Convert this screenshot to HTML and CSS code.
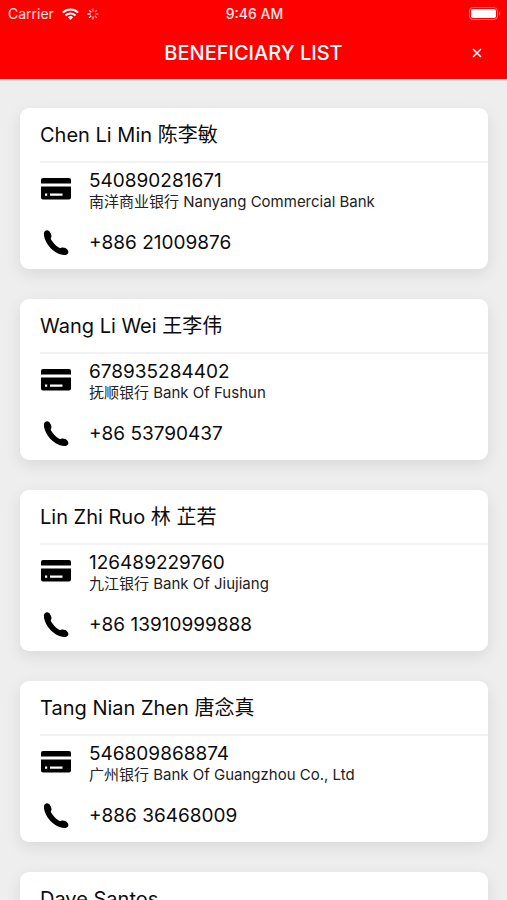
FILE: index.html
```html
<!DOCTYPE html>
<html lang="en">
<head>
<meta charset="utf-8">
<meta name="viewport" content="width=device-width, initial-scale=1">
<title>Beneficiary List</title>
<link rel="stylesheet" href="styles.css">
</head>
<body>
<svg class="sprite" aria-hidden="true">
  <symbol id="card" viewBox="0 0 30 22">
    <path d="M2 0h26a2 2 0 0 1 2 2v3.500H0V2a2 2 0 0 1 2-2z"/>
    <path fill-rule="evenodd" d="M0 8.500h30v11a2 2 0 0 1-2 2H2a2 2 0 0 1-2-2zM4 15.500v2.200h2.200v-2.200zM9 15.500v2.200h12.500v-2.200z"/>
  </symbol>
  <symbol id="phone" viewBox="0 0 26 26">
    <path d="M3.800 5.500C5.200 13 12 20.500 20 22" fill="none" stroke="#000" stroke-width="5.500" stroke-linecap="round"/>
    <ellipse cx="4.700" cy="4.800" rx="3.400" ry="4.600" transform="rotate(-24 4.700 4.800)"/>
    <ellipse cx="20.800" cy="21.200" rx="4.800" ry="3.500" transform="rotate(26 20.800 21.200)"/>
  </symbol>
</svg>
<div class="app">
  <header class="top">
    <div class="status">
      <div class="status-left">
        <span>Carrier</span>
        <svg class="wifi" viewBox="0 0 17 12" aria-hidden="true"><path d="M.8 4.600a11 11 0 0 1 15.400 0M3.500 7.500a7.200 7.200 0 0 1 10 0"/><path class="dot" d="M5.800 9.300a4 4 0 0 1 5.400 0L8.500 12z"/></svg>
        <svg class="spinner" viewBox="0 0 12 12" aria-hidden="true"><path opacity=".5" d="M6 .5v3M9.900 2.100L7.800 4.200M11.500 6h-3"/><path opacity=".7" d="M9.900 9.900L7.800 7.800M6 11.500v-3"/><path opacity=".95" d="M2.100 9.900l2.100-2.100M.5 6h3M2.100 2.100l2.100 2.100"/></svg>
      </div>
      <span class="time">9:46 AM</span>
      <svg class="battery" viewBox="0 0 32 14" aria-hidden="true"><rect class="shell" x=".5" y=".5" width="28" height="12" rx="3.500"/><rect class="charge" x="2" y="2" width="25" height="9" rx="2"/><path class="tip" d="M30 4.500c1.800.6 1.800 3.400 0 4z"/></svg>
    </div>
    <div class="bar">
      <h1>BENEFICIARY LIST</h1>
      <button class="close" type="button" aria-label="Close"><svg viewBox="0 0 10 10" aria-hidden="true"><path d="M1 1l8 8M9 1L1 9"/></svg></button>
    </div>
  </header>
  <main class="list">
    <article class="card">
      <h2>Chen Li Min 陈李敏</h2>
      <div class="row account"><svg class="card-icon" aria-hidden="true"><use href="#card"/></svg><div><p class="number">540890281671</p><p class="bank">南洋商业银行 Nanyang Commercial Bank</p></div></div>
      <div class="row phone"><svg class="phone-icon" aria-hidden="true"><use href="#phone"/></svg><p class="number">+886 21009876</p></div>
    </article>
    <article class="card">
      <h2>Wang Li Wei 王李伟</h2>
      <div class="row account"><svg class="card-icon" aria-hidden="true"><use href="#card"/></svg><div><p class="number">678935284402</p><p class="bank">抚顺银行 Bank Of Fushun</p></div></div>
      <div class="row phone"><svg class="phone-icon" aria-hidden="true"><use href="#phone"/></svg><p class="number">+86 53790437</p></div>
    </article>
    <article class="card">
      <h2>Lin Zhi Ruo 林 芷若</h2>
      <div class="row account"><svg class="card-icon" aria-hidden="true"><use href="#card"/></svg><div><p class="number">126489229760</p><p class="bank">九江银行 Bank Of Jiujiang</p></div></div>
      <div class="row phone"><svg class="phone-icon" aria-hidden="true"><use href="#phone"/></svg><p class="number">+86 13910999888</p></div>
    </article>
    <article class="card">
      <h2>Tang Nian Zhen 唐念真</h2>
      <div class="row account"><svg class="card-icon" aria-hidden="true"><use href="#card"/></svg><div><p class="number">546809868874</p><p class="bank">广州银行 Bank Of Guangzhou Co., Ltd</p></div></div>
      <div class="row phone"><svg class="phone-icon" aria-hidden="true"><use href="#phone"/></svg><p class="number">+886 36468009</p></div>
    </article>
    <article class="card">
      <h2>Dave Santos</h2>
    </article>
  </main>
</div>
</body>
</html>
```
FILE: styles.css
```css
* { box-sizing: border-box; }
body {
  margin: 0;
  background: #eee;
  color: #0c0c0c;
  font-family: Inter, "Noto Sans CJK SC", sans-serif;
}
h1, h2, p { margin: 0; font-weight: 400; }
.sprite { display: none; }
.app { display: flex; flex-direction: column; height: 100vh; }
.top { flex: none; background: #f00; color: #fff; }
.status {
  display: grid;
  grid-template-columns: 1fr auto 1fr;
  align-items: center;
  height: 27px;
  padding: 0 6px 0 8px;
  font-size: 14px;
}
.status-left { display: flex; align-items: center; gap: 8px; color: #ffe0e0; }
.wifi { width: 17px; height: 12px; fill: none; stroke: #fff; stroke-width: 2; }
.wifi .dot { fill: #fff; stroke: none; }
.spinner { width: 12px; height: 12px; fill: none; stroke: #fff; stroke-width: 1.3; }
.time { font-size: 14px; font-weight: 500; color: #ffe8e8; }
.battery { justify-self: end; width: 32px; height: 14px; }
.shell { fill: none; stroke: #ff8080; }
.charge { fill: #fff; }
.tip { fill: #ff8080; }
.bar {
  display: grid;
  grid-template-columns: 40px 1fr 40px;
  align-items: center;
  height: 52px;
  padding: 0 10px;
}
.bar h1 { grid-column: 2; font-size: 20px; line-height: 24px; font-weight: 500; text-align: center; }
.close {
  display: grid;
  place-items: center;
  height: 40px;
  padding: 0;
  border: 0;
  background: none;
}
.close svg { width: 10px; height: 10px; fill: none; stroke: #fff; stroke-width: 1.5; }
.list {
  flex: 1;
  min-height: 0;
  overflow-y: auto;
  scrollbar-width: none;
  display: flex;
  flex-direction: column;
  gap: 30px;
  padding: 29px 19px 29px 20px;
}
.card {
  flex: none;
  min-height: 161px;
  border-radius: 9px;
  background: #fff;
  box-shadow: 0 5px 16px rgba(0, 0, 0, 0.09);
}
.card h2 {
  height: 55px;
  margin-left: 20px;
  border-bottom: 2px solid #f3f3f3;
  font-size: 20px;
  line-height: 54px;
}
.row { display: grid; grid-template-columns: 48px 1fr; align-items: center; padding-left: 21px; }
.account { height: 53px; align-items: start; padding-top: 7px; }
.phone { height: 53px; padding-top: 1px; }
.card-icon { width: 30px; height: 22px; margin-top: 8px; }
.phone-icon { width: 26px; height: 26px; margin-left: 2px; }
.number { font-size: 19px; line-height: 22px; }
.bank { font-size: 15px; line-height: 20px; color: #222; }
```
